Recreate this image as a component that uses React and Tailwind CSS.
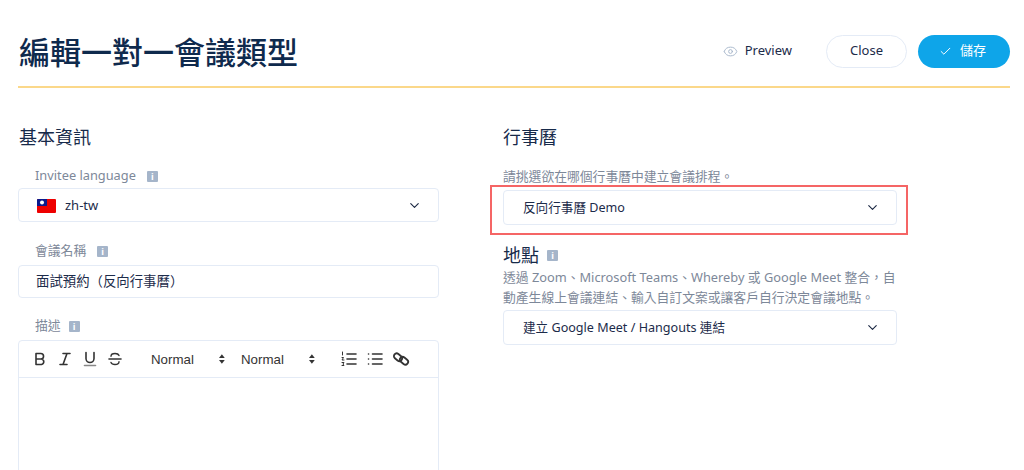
import { ChevronDown, Check, Eye } from 'lucide-react';

const latin = "font-['Noto_Sans','Noto_Sans_CJK_TC',sans-serif]";

function InfoBadge({ className = 'ml-[8px]' }) {
  return (
    <span className={`inline-flex h-[11px] w-[11px] items-center justify-center rounded-[1px] bg-[#a5b5ca] text-[9px] font-bold leading-none text-white ${className}`}>
      i
    </span>
  );
}

function FieldLabel({ children, badge }) {
  return (
    <div className="flex h-[20px] items-center pl-[17px] text-[12.800px] text-[#7d8899]">
      {children}
      <InfoBadge className={badge} />
    </div>
  );
}

function SelectBox({ children, className = '' }) {
  return (
    <div className={`flex items-center justify-between rounded-[4px] border border-[#e4ebf6] bg-white pr-[16px] text-[#1c2b4a] ${className}`}>
      <span className="pt-[2px]">{children}</span>
      <ChevronDown size={15} strokeWidth={1.8} className="text-[#1a2742]" />
    </div>
  );
}

function Flag() {
  return (
    <svg width="19" height="14" viewBox="0 0 19 14" className="rounded-[1px]">
      <rect width="19" height="14" fill="#ee0000" />
      <rect width="10" height="7" fill="#0a1a8c" />
      <circle cx="5" cy="3.5" r="2" fill="#fff" />
    </svg>
  );
}

function ToolbarIcon({ children }) {
  return (
    <svg width="18" height="18" viewBox="0 0 18 18" fill="none" stroke="#333" strokeWidth="1.6" strokeLinecap="round" strokeLinejoin="round">
      {children}
    </svg>
  );
}

function Updown() {
  return (
    <svg width="6" height="10" viewBox="0 0 6 10" fill="#333">
      <path d="M3 0L6 4H0z" />
      <path d="M3 10L0 6H6z" />
    </svg>
  );
}

function Toolbar() {
  return (
    <div className="flex h-[37px] items-center border-b border-[#e4ebf6] pl-[12px] font-['Liberation_Sans',sans-serif] text-[13.300px] text-[#333]">
      <div className="flex w-[104px] gap-[7px]">
        <ToolbarIcon>
          <path d="M5 3.500h4.800a2.600 2.600 0 0 1 0 5.500H5zM5 9h5.500a2.800 2.800 0 0 1 0 5.500H5z" />
        </ToolbarIcon>
        <ToolbarIcon>
          <path d="M7 3.500h7M4 14.500h7M11 3.500L7 14.500" />
        </ToolbarIcon>
        <ToolbarIcon>
          <path d="M5 2.500v6a4 4 0 0 0 8 0v-6" />
          <path d="M3.500 15.500h11" stroke="#888" />
        </ToolbarIcon>
        <ToolbarIcon>
          <path d="M3 9h12" />
          <path d="M13 5.500c-.5-1.300-2-2-4-2-2.500 0-4 1-4 2.700M5 12.500c.5 1.300 2 2 4 2 2.500 0 4-1 4-2.700" strokeWidth="1.400" />
        </ToolbarIcon>
      </div>
      <div className="flex w-[90px] items-center pl-[16px]">
        <span className="w-[71px] pt-[1px]">Normal</span>
        <Updown />
      </div>
      <div className="flex w-[90px] items-center pl-[16px]">
        <span className="w-[71px] pt-[1px]">Normal</span>
        <Updown />
      </div>
      <div className="ml-[25px] flex gap-[8px]">
        <ToolbarIcon>
          <path d="M7 4h9M7 9h9M7 14h9" />
          <path d="M2.500 2v3M2 7.500h1.500L2 10h2M2 12.500h2l-1 1.500 1 1.500H2" strokeWidth="1" />
        </ToolbarIcon>
        <ToolbarIcon>
          <path d="M6.500 4h9.500M6.500 9h9.500M6.500 14h9.500M2.500 4h.1M2.500 9h.1M2.500 14h.1" />
        </ToolbarIcon>
        <ToolbarIcon>
          <rect x="1.500" y="4.500" width="9" height="5.500" rx="2.750" transform="rotate(40 6 7.250)" strokeWidth="1.800" />
          <rect x="7.500" y="8" width="9" height="5.500" rx="2.750" transform="rotate(40 12 10.750)" strokeWidth="1.800" />
        </ToolbarIcon>
      </div>
    </div>
  );
}

export default function App() {
  return (
    <div className={`h-[470px] w-[1024px] overflow-hidden bg-white pl-[18px] pr-[14px] ${latin}`}>
      {/* Header */}
      <header className="flex h-[86px] items-center justify-between pt-[16px]">
        <h1 className="pl-[1px] pt-[2px] text-[31px] font-medium leading-none text-[#0f2a4d]">編輯一對一會議類型</h1>
        <div className="flex items-center">
          <button className="mr-[34px] flex items-center gap-[7px] text-[13px] text-[#1c2b4a]">
            <Eye size={15} strokeWidth={1.500} className="text-[#a5b5ca]" />
            Preview
          </button>
          <button className="h-[33px] w-[81px] rounded-full border border-[#e4ebf6] text-[13px] text-[#1c2b4a]">Close</button>
          <button className="ml-[11px] flex h-[33px] w-[92px] items-center justify-center gap-[8px] rounded-full bg-[#0ea5e9] pr-[3px] text-[13px] text-white">
            <Check size={13} strokeWidth={1.800} />
            儲存
          </button>
        </div>
      </header>
      <div className="h-[2px] bg-[#fbd88a]" />

      <div className="mt-[37px] flex">
        {/* Left */}
        <section className="w-[421px]">
          <h2 className="pl-[1px] text-[18px] leading-[24px] text-[#172a4a]">基本資訊</h2>
          <div className="mt-[17px]">
            <FieldLabel badge="ml-[11px]">Invitee language</FieldLabel>
          </div>
          <SelectBox className="mt-[2px] h-[34px] pl-[18px] text-[13px]">
            <span className="flex items-center gap-[9px]">
              <Flag />
              zh-tw
            </span>
          </SelectBox>
          <div className="mt-[19px]">
            <FieldLabel badge="ml-[11px]">會議名稱</FieldLabel>
          </div>
          <div className="mt-[4px] flex h-[33px] items-center rounded-[4px] border border-[#e4ebf6] pl-[17px] text-[13.400px] text-[#1c2b4a]">
            面試預約（反向行事曆）
          </div>
          <div className="mt-[18px]">
            <FieldLabel badge="ml-[8px]">描述</FieldLabel>
          </div>
          <div className="mt-[4px] h-[200px] rounded-[4px] border border-[#e4ebf6]">
            <Toolbar />
          </div>
        </section>

        {/* Right */}
        <section className="ml-[64px] w-[394px]">
          <h2 className="text-[18px] leading-[24px] text-[#172a4a]">行事曆</h2>
          <p className="mt-[17px] text-[12.800px] leading-[20px] text-[#7d8899]">請挑選欲在哪個行事曆中建立會議排程。</p>
          <div className="relative mt-[4px]">
            <SelectBox className="h-[35px] pl-[19px] text-[12.600px]">反向行事曆 Demo</SelectBox>
            <div className="pointer-events-none absolute -bottom-[10px] -left-[13px] -right-[11px] -top-[5px] border-2 border-[#f56565]" />
          </div>
          <h2 className="mt-[18px] flex items-center text-[18px] leading-[24px] text-[#172a4a]">
            地點
            <InfoBadge />
          </h2>
          <p className="text-[12.800px] leading-[20px] text-[#7d8899]">
            透過 Zoom、Microsoft Teams、Whereby 或 Google Meet 整合，自動產生線上會議連結、輸入自訂文案或讓客戶自行決定會議地點。
          </p>
          <SelectBox className="mt-[3px] h-[35px] pl-[19px] text-[12.600px]">建立 Google Meet / Hangouts 連結</SelectBox>
        </section>
      </div>
    </div>
  );
}
